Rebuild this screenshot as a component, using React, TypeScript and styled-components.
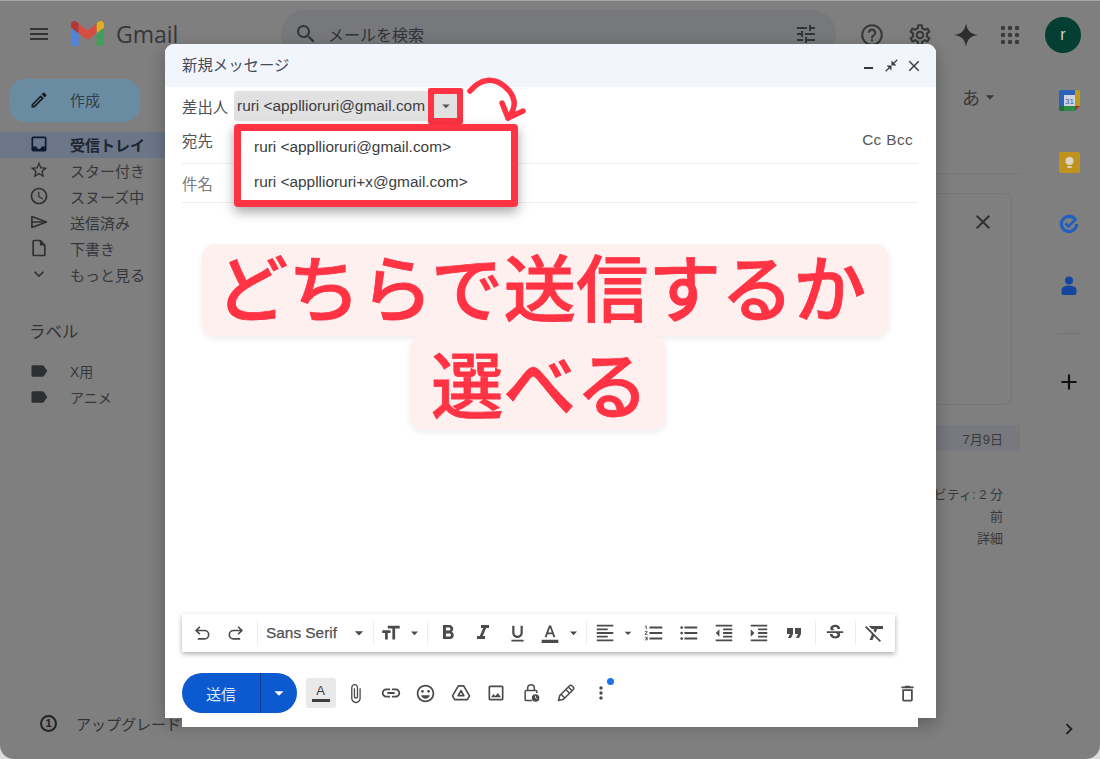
import React from 'react';
import styled, { createGlobalStyle } from 'styled-components';
import {
  MdMenu, MdSearch, MdTune, MdHelpOutline, MdOutlineSettings, MdOutlineEdit, MdInbox, MdStarBorder,
  MdOutlineWatchLater, MdOutlineInsertDriveFile, MdExpandMore, MdLabel, MdArrowDropDown, MdClose,
  MdAdd, MdChevronRight, MdFormatBold, MdFormatItalic, MdFormatUnderlined,
  MdFormatColorText, MdFormatAlignLeft, MdFormatListNumbered, MdFormatListBulleted, MdFormatIndentDecrease,
  MdFormatIndentIncrease, MdFormatQuote, MdStrikethroughS, MdFormatClear, MdAttachFile, MdLink,
  MdOutlineEmojiEmotions, MdOutlineInsertPhoto, MdMoreVert, MdOutlineDelete, MdCloseFullscreen, MdTextFields,
} from 'react-icons/md';

const JP = `"Liberation Sans", "Noto Sans CJK JP", sans-serif`;
const RED = '#ff3344';

const GlobalStyle = createGlobalStyle`
  html, body { margin: 0; padding: 0; background: #dcdcdc; }
  * { box-sizing: border-box; }
`;

const Frame = styled.div`
  position: relative;
  width: 1100px;
  height: 759px;
  overflow: hidden;
  display: flex;
  flex-direction: column;
  background: #7f7f80;
  border-top: 1px solid #a6a6a6;
  border-radius: 0 0 14px 14px;
  font-family: ${JP};
  color: #333436;
`;

const TopBar = styled.header`
  height: 68px;
  flex: none;
  display: flex;
  align-items: center;
  padding-bottom: 3px;
`;

const Brand = styled.div`
  width: 281px;
  display: flex;
  align-items: center;
  padding-left: 27px;
  color: #333436;
`;

const LogoMark = styled.svg`
  width: 33px;
  height: 25px;
  margin-left: 20px;
  opacity: 0.8;
`;

const BrandName = styled.span`
  margin-left: 12px;
  font-family: "Open Sans", sans-serif;
  font-size: 23px;
  color: #36373a;
`;

const SearchBar = styled.div`
  width: 555px;
  height: 48px;
  display: flex;
  align-items: center;
  padding: 0 18px 0 13px;
  border-radius: 24px;
  background: #76787c;
  font-size: 16px;
  color: #333436;
`;

const SearchText = styled.span`
  margin-left: 10px;
  flex: 1;
`;

const TopActions = styled.div`
  display: flex;
  align-items: center;
  margin-left: 14px;
  padding-top: 2px;
  color: #38393b;
`;

const ActionSlot = styled.div<{ $w: number }>`
  width: ${(p) => p.$w}px;
  display: flex;
  justify-content: center;
`;

const AppsGrid = styled.svg`
  width: 20px;
  height: 20px;
  fill: #3a3b3d;
`;

const Avatar = styled.div`
  width: 36px;
  height: 36px;
  margin-left: 11px;
  border-radius: 50%;
  background: #053e32;
  color: #c9d4d0;
  display: flex;
  align-items: center;
  justify-content: center;
  font-size: 16px;
`;

const Body = styled.div`
  flex: 1;
  min-height: 0;
  display: flex;
`;

const Sidebar = styled.nav`
  width: 165px;
  flex: none;
  display: flex;
  flex-direction: column;
  padding: 10px 0 23px;
`;

const ComposeButton = styled.div`
  width: 131px;
  height: 43px;
  margin-left: 9px;
  border-radius: 16px;
  background: #6a8ca3;
  display: flex;
  align-items: center;
  padding: 0 0 2px 20px;
  gap: 21px;
  font-size: 15px;
  color: #33404a;
`;

const NavList = styled.div`
  margin-top: 10px;
`;

const NavRow = styled.div<{ $active?: boolean }>`
  height: 26px;
  display: flex;
  align-items: center;
  padding: 0 0 2px 29px;
  gap: 21px;
  font-size: 15px;
  font-weight: ${(p) => (p.$active ? 700 : 400)};
  color: ${(p) => (p.$active ? '#1f2430' : '#36373a')};
  background: ${(p) => (p.$active ? '#6b7689' : 'transparent')};
  svg { color: ${(p) => (p.$active ? '#0c1a33' : '#2e2f31')}; flex: none; }
`;

const LabelTitle = styled.div`
  margin: 32px 0 15px 29px;
  height: 24px;
  line-height: 24px;
  font-size: 16.5px;
  color: #333436;
`;

const LabelRow = styled(NavRow)`
  font-size: 14px;
`;

const UpgradeRow = styled.div`
  margin-top: auto;
  height: 26px;
  display: flex;
  align-items: center;
  padding-left: 40px;
  gap: 19px;
  font-size: 15px;
  white-space: nowrap;
  color: #333436;
`;

const UpgradeBadge = styled.span`
  width: 17px;
  height: 17px;
  flex: none;
  border: 2px solid #222;
  border-radius: 50%;
  display: flex;
  align-items: center;
  justify-content: center;
  font-size: 11px;
  font-weight: 700;
  color: #222;
`;

const Main = styled.main`
  flex: 1;
  display: flex;
  justify-content: flex-end;
`;

const MainSide = styled.div`
  width: 102px;
  padding-top: 13px;
`;

const LangRow = styled.div`
  height: 30px;
  padding-left: 26px;
  display: flex;
  align-items: center;
  font-size: 18px;
  color: #38393b;
`;

const FaintLine = styled.div`
  margin-top: 61px;
  width: 86px;
  height: 1px;
  background: #77787a;
`;

const SideCard = styled.div`
  margin-top: 19px;
  width: 76px;
  height: 212px;
  border: 1px solid #76777a;
  border-left: none;
  border-radius: 0 8px 8px 0;
  padding: 16px 0 0 35px;
  color: #303133;
`;

const DateRow = styled.div`
  margin-top: 20px;
  width: 84px;
  height: 26px;
  background: #77797e;
  display: flex;
  align-items: center;
  justify-content: flex-end;
  padding-right: 17px;
  font-size: 13px;
  color: #38393b;
`;

const SideNote = styled.div`
  margin-top: 33px;
  width: 67px;
  text-align: right;
  font-size: 13px;
  line-height: 22px;
  color: #38393b;
  white-space: nowrap;
  display: flex;
  flex-direction: column;
  align-items: flex-end;
`;

const Rail = styled.aside`
  width: 62px;
  flex: none;
  display: flex;
  flex-direction: column;
  align-items: center;
  padding: 19px 0 19px;
`;

const RailSlot = styled.div`
  height: 24px;
  margin-bottom: 38px;
  display: flex;
  align-items: center;
  justify-content: center;
`;

const RailDivider = styled.div`
  width: 22px;
  height: 1px;
  margin: -3px 0 36px;
  background: #747577;
`;

const RailBottom = styled.div`
  margin-top: auto;
  color: #1d1d1f;
  display: flex;
`;

/* compose window sits above the dimmed inbox */
const Compose = styled.section`
  position: absolute;
  left: 165px;
  top: 43px;
  width: 771px;
  height: 674px;
  display: flex;
  flex-direction: column;
  background: #fff;
  border-radius: 9px 9px 0 0;
  box-shadow: 0 6px 18px rgba(0, 0, 0, 0.28);
`;

const ComposeHead = styled.div`
  height: 43px;
  flex: none;
  display: flex;
  align-items: center;
  padding: 0 13px 0 17px;
  background: #f2f6fc;
  border-radius: 9px 9px 0 0;
  font-size: 15.4px;
  color: #444b5a;
`;

const ComposeTitle = styled.span`
  flex: 1;
  padding-bottom: 4px;
`;

const HeadIcons = styled.div`
  display: flex;
  align-items: center;
  gap: 5px;
  color: #3b3f46;
`;

const HeadSlot = styled.span`
  width: 18px;
  height: 18px;
  display: flex;
  align-items: center;
  justify-content: center;
`;

const MinBar = styled.span`
  width: 9px;
  height: 2px;
  margin-top: 5px;
  background: #33363b;
`;

const Field = styled.div<{ $h: number; $line?: boolean; $lift?: number }>`
  height: ${(p) => p.$h}px;
  flex: none;
  margin: 0 18px 0 17px;
  padding: 0 5px ${(p) => p.$lift ?? 0}px 0;
  display: flex;
  align-items: center;
  font-size: 15.4px;
  color: #55585c;
  border-bottom: ${(p) => (p.$line ? '1px solid #eeeeee' : 'none')};
`;

const FieldName = styled.span<{ $muted?: boolean }>`
  width: 52px;
  flex: none;
  color: ${(p) => (p.$muted ? '#7a7c80' : '#4e5155')};
`;

const FromValue = styled.div`
  width: 194px;
  height: 30px;
  padding-left: 3px;
  display: flex;
  align-items: center;
  background: #e1e1e1;
  border-radius: 3px 0 0 3px;
  color: #3c3d40;
  white-space: nowrap;
  overflow: hidden;
`;

const FromToggle = styled.div`
  width: 35px;
  height: 36px;
  flex: none;
  border: 6px solid ${RED};
  border-radius: 2px;
  background: #e1e1e1;
  color: #555;
  display: flex;
  align-items: center;
  justify-content: center;
`;

const CcBcc = styled.span`
  margin-left: auto;
  letter-spacing: 0.35px;
  color: #55585c;
`;

const FromMenu = styled.div`
  position: absolute;
  left: 69px;
  top: 80px;
  width: 284px;
  height: 83px;
  padding: 0 0 0 13px;
  background: #fff;
  border: 7px solid ${RED};
  border-radius: 4px;
  box-shadow: 0 5px 12px rgba(0, 0, 0, 0.35);
  font-size: 15.4px;
  color: #3c3d40;
`;

const MenuItem = styled.div`
  height: 35px;
  line-height: 32px;
  white-space: nowrap;
`;

const Arrow = styled.svg`
  position: absolute;
  left: 300px;
  top: 32px;
  width: 62px;
  height: 46px;
`;

const Content = styled.div`
  flex: 1;
  min-height: 0;
  padding-top: 41px;
  display: flex;
  flex-direction: column;
  align-items: center;
  margin-left: -10px;
  font-size: 72.5px;
  font-weight: 500;
  color: ${RED};
  -webkit-text-stroke: 0.8px ${RED};
  font-family: "Noto Sans CJK JP", sans-serif;
`;

const Callout = styled.div<{ $h: number; $padL: number; $padR: number; $lift: number; $shift?: number }>`
  height: ${(p) => p.$h}px;
  line-height: ${(p) => p.$h - p.$lift}px;
  padding: 0 ${(p) => p.$padR}px 0 ${(p) => p.$padL}px;
  margin-right: ${(p) => p.$shift ?? 0}px;
  background: #fff0f0;
  border-radius: 13px;
  white-space: nowrap;
  box-shadow: 0 3px 6px rgba(0, 0, 0, 0.07);
`;

const FormatBar = styled.div`
  width: 713px;
  height: 38px;
  flex: none;
  margin-left: 17px;
  padding-left: 3px;
  display: flex;
  align-items: center;
  background: #fff;
  box-shadow: 0 2px 5px rgba(0, 0, 0, 0.32);
  color: #4a4b4d;
`;

const FormatBtn = styled.span<{ $w: number }>`
  width: ${(p) => p.$w}px;
  flex: none;
  display: flex;
  align-items: center;
  justify-content: center;
`;

const SizeIcon = styled(MdTextFields)`
  transform: scaleX(-1);
`;

const FontName = styled.span`
  width: 89px;
  flex: none;
  padding-left: 6px;
  font-size: 15.4px;
  color: #505154;
  white-space: nowrap;
  -webkit-text-stroke: 0.25px #505154;
`;

const BarSep = styled.span`
  width: 1px;
  height: 24px;
  flex: none;
  margin: 0 2px 0 4px;
  background: #ececec;
`;

const Footer = styled.div`
  height: 67px;
  flex: none;
  margin: 8px 18px -9px 17px;
  padding-top: 13px;
  display: flex;
  align-items: flex-start;
  background: #fff;
  color: #4a4b4d;
`;

const SendGroup = styled.div`
  width: 115px;
  height: 40px;
  flex: none;
  margin-right: 6px;
  display: flex;
  border-radius: 20px;
  overflow: hidden;
  background: #0d5ad0;
  color: #dfe9fb;
  font-size: 15px;
`;

const SendLabel = styled.div`
  width: 79px;
  display: flex;
  align-items: center;
  justify-content: center;
  border-right: 1px solid #0a3f94;
`;

const SendCaret = styled.div`
  flex: 1;
  display: flex;
  align-items: center;
  justify-content: center;
  color: #fff;
`;

const FootSlot = styled.div`
  position: relative;
  width: 35px;
  height: 40px;
  flex: none;
  display: flex;
  align-items: center;
  justify-content: center;
`;

const ColorChip = styled.span`
  width: 30px;
  height: 30px;
  border-radius: 3px;
  background: #e9e9e9;
  display: flex;
  flex-direction: column;
  align-items: center;
  justify-content: center;
  font-size: 13px;
  line-height: 14px;
  color: #3d3e40;
  &::after {
    content: '';
    width: 18px;
    height: 3px;
    margin-top: 1px;
    background: #3d3e40;
  }
`;

const BlueDot = styled.span`
  position: absolute;
  left: 24px;
  top: 5px;
  width: 7px;
  height: 7px;
  border-radius: 50%;
  background: #1a73e8;
`;

const TrashSlot = styled.div`
  margin-left: auto;
  width: 22px;
  height: 40px;
  display: flex;
  align-items: center;
  justify-content: center;
`;

const GmailLogo = () => (
  <LogoMark viewBox="52 42 88 66">
    <path fill="#4285f4" d="M58 108h14V74L52 59v43c0 3.32 2.69 6 6 6" />
    <path fill="#34a853" d="M120 108h14c3.32 0 6-2.69 6-6V59l-20 15" />
    <path fill="#fbbc04" d="M120 48v26l20-15v-8c0-7.42-8.47-11.65-14.4-7.2" />
    <path fill="#ea4335" d="M72 74V48l24 18 24-18v26L96 92" />
    <path fill="#c5221f" d="M52 51v8l20 15V48l-5.6-4.2c-5.94-4.45-14.4-.22-14.4 7.2" />
  </LogoMark>
);

const Sparkle = () => (
  <svg width="26" height="26" viewBox="0 0 24 24" fill="#2c2d2f">
    <path d="M12 1C13 8 16 11 23 12C16 13 13 16 12 23C11 16 8 13 1 12C8 11 11 8 12 1Z" />
  </svg>
);

const AppsIcon = () => (
  <AppsGrid viewBox="0 0 20 20">
    {[3, 10, 17].map((y) =>
      [3, 10, 17].map((x) => <circle key={`${x}-${y}`} cx={x} cy={y} r="2.2" />),
    )}
  </AppsGrid>
);

const CalendarIcon = () => (
  <svg width="21" height="21" viewBox="0 0 21 21">
    <path fill="#2c62b8" d="M2 0h14v5H5v11H0V2a2 2 0 0 1 2-2z" />
    <path fill="#c09a1c" d="M16 0h3a2 2 0 0 1 2 2v3h-5z" />
    <path fill="#c09a1c" d="M16 5h5v11h-5z" />
    <path fill="#2d8a47" d="M5 16h11v5H5z" />
    <path fill="#1f6f38" d="M0 16h5v5H2a2 2 0 0 1-2-2z" />
    <path fill="#a93226" d="M16 16h5l-5 5z" />
    <rect x="5" y="5" width="11" height="11" fill="#cfd3da" />
    <text x="10.5" y="14" textAnchor="middle" fontSize="8" fill="#2c62b8" fontFamily="Liberation Sans, sans-serif">31</text>
  </svg>
);

const KeepIcon = () => (
  <svg width="21" height="21" viewBox="0 0 21 21">
    <rect width="21" height="21" rx="2" fill="#c0941c" />
    <circle cx="10.5" cy="9" r="4" fill="#d9d6c6" />
    <rect x="8.5" y="14" width="4" height="2" fill="#d9d6c6" />
  </svg>
);

const TasksIcon = () => (
  <svg width="20" height="20" viewBox="0 0 20 20" fill="none">
    <path d="M16.8 6.5A7.6 7.6 0 1 0 17.6 10" stroke="#1f5fc0" strokeWidth="3.2" />
    <path d="M6.5 9.5l3 3L17 5" stroke="#1f5fc0" strokeWidth="2.6" />
  </svg>
);

const ContactsIcon = () => (
  <svg width="18" height="22" viewBox="0 0 18 22" fill="#1446a0">
    <circle cx="9" cy="5.5" r="4" />
    <path d="M1.5 18v-3c0-3 3.5-4.5 7.5-4.5s7.5 1.5 7.5 4.5v3a2 2 0 0 1-2 2h-11a2 2 0 0 1-2-2z" />
  </svg>
);

const SentIcon = () => (
  <svg width="20" height="20" viewBox="0 0 24 24" fill="none" stroke="#2e2f31" strokeWidth="2" strokeLinejoin="round">
    <path d="M3.5 5.5L21 12L3.5 18.5z" />
    <path d="M3.5 12H20" />
  </svg>
);

const HistoryIcon = ({ flip }: { flip?: boolean }) => (
  <svg
    width="20"
    height="20"
    viewBox="0 0 24 24"
    fill="none"
    stroke="currentColor"
    strokeWidth="2"
    transform={flip ? 'scale(-1 1)' : undefined}
  >
    <path d="M5 9h10a4.5 4.5 0 0 1 0 10H7" />
    <path d="M9.5 4.5L5 9l4.5 4.5" />
  </svg>
);

const DriveIcon = () => (
  <svg width="20" height="20" viewBox="0 0 24 24" fill="none" stroke="currentColor" strokeWidth="2" strokeLinejoin="round">
    <path d="M8.8 3.5h6.4l7 12-2.6 4.5H4.4l-2.6-4.5z" />
    <path d="M12 9.2l3.4 6H8.6z" />
  </svg>
);

const LockClockIcon = () => (
  <svg width="20" height="20" viewBox="0 0 24 24" fill="none" stroke="currentColor" strokeWidth="1.8">
    <path d="M8 9V6a4 4 0 0 1 8 0v3" />
    <path d="M13 21H6a1 1 0 0 1-1-1V10a1 1 0 0 1 1-1h12a1 1 0 0 1 1 1v2" />
    <circle cx="17.5" cy="18" r="4.5" fill="currentColor" stroke="none" />
    <path d="M17.5 15.5V18l1.6 1" stroke="#fff" strokeWidth="1" />
  </svg>
);

const SignatureIcon = () => (
  <svg width="20" height="20" viewBox="0 0 24 24" fill="none" stroke="currentColor" strokeWidth="1.8" strokeLinejoin="round">
    <path d="M3 21l1.5-6L16 3.5a2.5 2.5 0 0 1 3.5 0l1 1a2.5 2.5 0 0 1 0 3.5L9 19.5z" />
    <path d="M6 13.5l4.5 4.5M12 8l4 4M15 5l4 4" />
  </svg>
);

const navItems = [
  { icon: <MdInbox size={20} />, text: '受信トレイ', active: true },
  { icon: <MdStarBorder size={20} />, text: 'スター付き' },
  { icon: <MdOutlineWatchLater size={20} />, text: 'スヌーズ中' },
  { icon: <SentIcon />, text: '送信済み' },
  { icon: <MdOutlineInsertDriveFile size={20} />, text: '下書き' },
  { icon: <MdExpandMore size={20} />, text: 'もっと見る' },
];

export default function App() {
  return (
    <>
      <GlobalStyle />
      <Frame>
        <TopBar>
          <Brand>
            <MdMenu size={24} />
            <GmailLogo />
            <BrandName>Gmail</BrandName>
          </Brand>
          <SearchBar>
            <MdSearch size={24} />
            <SearchText>メールを検索</SearchText>
            <MdTune size={24} />
          </SearchBar>
          <TopActions>
            <ActionSlot $w={44}><MdHelpOutline size={26} /></ActionSlot>
            <ActionSlot $w={52}><MdOutlineSettings size={26} /></ActionSlot>
            <ActionSlot $w={40}><Sparkle /></ActionSlot>
            <ActionSlot $w={48}><AppsIcon /></ActionSlot>
            <Avatar>r</Avatar>
          </TopActions>
        </TopBar>
        <Body>
          <Sidebar>
            <ComposeButton>
              <MdOutlineEdit size={20} color="#15191c" />
              作成
            </ComposeButton>
            <NavList>
              {navItems.map((item) => (
                <NavRow key={item.text} $active={item.active}>
                  {item.icon}
                  {item.text}
                </NavRow>
              ))}
            </NavList>
            <LabelTitle>ラベル</LabelTitle>
            <LabelRow><MdLabel size={20} />X用</LabelRow>
            <LabelRow><MdLabel size={20} />アニメ</LabelRow>
            <UpgradeRow>
              <UpgradeBadge>1</UpgradeBadge>
              アップグレード
            </UpgradeRow>
          </Sidebar>
          <Main>
            <MainSide>
              <LangRow>あ<MdArrowDropDown size={20} /></LangRow>
              <FaintLine />
              <SideCard><MdClose size={24} /></SideCard>
              <DateRow>7月9日</DateRow>
              <SideNote>
                <span>ビティ: 2 分</span>
                <span>前</span>
                <span>詳細</span>
              </SideNote>
            </MainSide>
          </Main>
          <Rail>
            <RailSlot><CalendarIcon /></RailSlot>
            <RailSlot><KeepIcon /></RailSlot>
            <RailSlot><TasksIcon /></RailSlot>
            <RailSlot><ContactsIcon /></RailSlot>
            <RailDivider />
            <RailSlot><MdAdd size={26} color="#111" /></RailSlot>
            <RailBottom><MdChevronRight size={22} /></RailBottom>
          </Rail>
        </Body>

        <Compose>
          <ComposeHead>
            <ComposeTitle>新規メッセージ</ComposeTitle>
            <HeadIcons>
              <HeadSlot><MinBar /></HeadSlot>
              <HeadSlot><MdCloseFullscreen size={15} /></HeadSlot>
              <HeadSlot><MdClose size={18} /></HeadSlot>
            </HeadIcons>
          </ComposeHead>
          <Field $h={38}>
            <FieldName>差出人</FieldName>
            <FromValue>ruri &lt;appllioruri@gmail.com</FromValue>
            <FromToggle><MdArrowDropDown size={18} /></FromToggle>
          </Field>
          <Field $h={39} $line $lift={8}>
            <FieldName>宛先</FieldName>
            <CcBcc>Cc Bcc</CcBcc>
          </Field>
          <Field $h={39} $line>
            <FieldName $muted>件名</FieldName>
          </Field>
          <Content>
            <Callout $h={92} $padL={13.6} $padR={23} $lift={10}>どちらで送信するか</Callout>
            <Callout $h={94} $padL={21} $padR={17.5} $lift={3} $shift={15}>選べる</Callout>
          </Content>
          <FormatBar>
            <FormatBtn $w={34}><HistoryIcon /></FormatBtn>
            <FormatBtn $w={34}><HistoryIcon flip /></FormatBtn>
            <BarSep />
            <FontName>Sans Serif</FontName>
            <FormatBtn $w={20}><MdArrowDropDown size={20} /></FormatBtn>
            <BarSep />
            <FormatBtn $w={30}><SizeIcon size={22} /></FormatBtn>
            <FormatBtn $w={17}><MdArrowDropDown size={20} /></FormatBtn>
            <BarSep />
            <FormatBtn $w={35}><MdFormatBold size={24} /></FormatBtn>
            <FormatBtn $w={35}><MdFormatItalic size={24} /></FormatBtn>
            <FormatBtn $w={35}><MdFormatUnderlined size={21} /></FormatBtn>
            <FormatBtn $w={30}><MdFormatColorText size={20} /></FormatBtn>
            <FormatBtn $w={17}><MdArrowDropDown size={20} /></FormatBtn>
            <BarSep />
            <FormatBtn $w={31}><MdFormatAlignLeft size={22} /></FormatBtn>
            <FormatBtn $w={16}><MdArrowDropDown size={20} /></FormatBtn>
            <FormatBtn $w={35}><MdFormatListNumbered size={22} /></FormatBtn>
            <FormatBtn $w={35}><MdFormatListBulleted size={22} /></FormatBtn>
            <FormatBtn $w={35}><MdFormatIndentDecrease size={22} /></FormatBtn>
            <FormatBtn $w={35}><MdFormatIndentIncrease size={22} /></FormatBtn>
            <FormatBtn $w={35}><MdFormatQuote size={24} /></FormatBtn>
            <BarSep />
            <FormatBtn $w={33}><MdStrikethroughS size={22} /></FormatBtn>
            <BarSep />
            <FormatBtn $w={34}><MdFormatClear size={24} /></FormatBtn>
          </FormatBar>
          <Footer>
            <SendGroup>
              <SendLabel>送信</SendLabel>
              <SendCaret><MdArrowDropDown size={22} /></SendCaret>
            </SendGroup>
            <FootSlot><ColorChip>A</ColorChip></FootSlot>
            <FootSlot><MdAttachFile size={21} /></FootSlot>
            <FootSlot><MdLink size={22} /></FootSlot>
            <FootSlot><MdOutlineEmojiEmotions size={21} /></FootSlot>
            <FootSlot><DriveIcon /></FootSlot>
            <FootSlot><MdOutlineInsertPhoto size={20} /></FootSlot>
            <FootSlot><LockClockIcon /></FootSlot>
            <FootSlot><SignatureIcon /></FootSlot>
            <FootSlot><MdMoreVert size={20} /><BlueDot /></FootSlot>
            <TrashSlot><MdOutlineDelete size={21} /></TrashSlot>
          </Footer>
          <FromMenu>
            <MenuItem>ruri &lt;appllioruri@gmail.com&gt;</MenuItem>
            <MenuItem>ruri &lt;appllioruri+x@gmail.com&gt;</MenuItem>
          </FromMenu>
          <Arrow viewBox="0 0 62 46" fill="none" stroke={RED} strokeWidth="5.5" strokeLinecap="round" strokeLinejoin="round">
            <path d="M5 15C10 10 15 5 22 4.5C34 3 47 14 49 25C50 31 47 37 43 42" />
            <path d="M37 27L43 42L58 35" />
          </Arrow>
        </Compose>
      </Frame>
    </>
  );
}
